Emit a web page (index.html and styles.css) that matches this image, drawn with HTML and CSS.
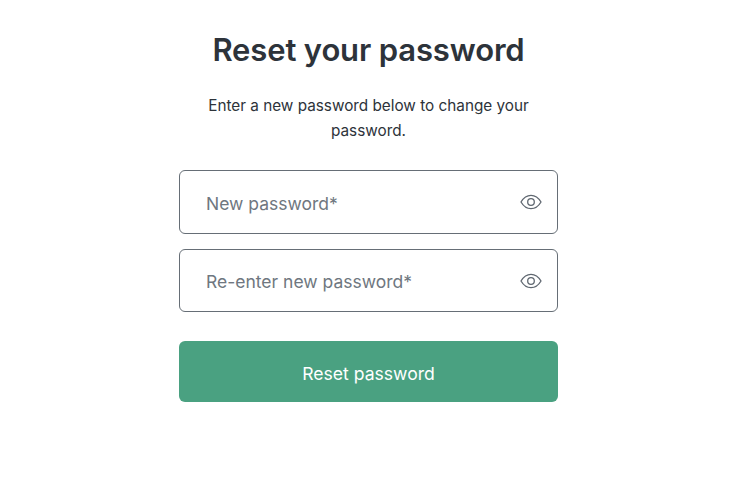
FILE: index.html
```html
<!DOCTYPE html>
<html lang="en">
<head>
<meta charset="utf-8">
<title>Reset your password</title>
<link rel="stylesheet" href="styles.css">
</head>
<body>
<main class="card">
  <h1 class="title">Reset your password</h1>
  <p class="lead">Enter a new password below to change your password.</p>
  <form class="form">
    <div class="field">
      <input class="input" type="password" placeholder="New password*">
      <svg class="eye" viewBox="0 0 22 16" aria-hidden="true"><path d="M1 8C3.600 3.600 7 1.300 11 1.300S18.400 3.600 21 8c-2.600 4.400-6 6.700-10 6.700S3.600 12.400 1 8Z"/><circle cx="11" cy="8" r="3.300"/></svg>
    </div>
    <div class="field">
      <input class="input" type="password" placeholder="Re-enter new password*">
      <svg class="eye" viewBox="0 0 22 16" aria-hidden="true"><path d="M1 8C3.600 3.600 7 1.300 11 1.300S18.400 3.600 21 8c-2.600 4.400-6 6.700-10 6.700S3.600 12.400 1 8Z"/><circle cx="11" cy="8" r="3.300"/></svg>
    </div>
    <button class="submit" type="button">Reset password</button>
  </form>
</main>
</body>
</html>
```
FILE: styles.css
```css
* { box-sizing: border-box; }
html, body { margin: 0; height: 100%; background: #fff; }
body {
  font-family: Inter, "Liberation Sans", sans-serif;
  color: #2d333a;
  overflow: hidden;
}
.card {
  width: 379px;
  margin-left: 179px;
  padding-top: 30px;
  display: flex;
  flex-direction: column;
  align-items: center;
}
.title {
  margin: 0;
  font-size: 31px;
  line-height: 40px;
  font-weight: 600;
  letter-spacing: -0.14px;
  white-space: nowrap;
}
.lead {
  width: 330px;
  margin: 23px 0 0;
  font-size: 15.300px;
  line-height: 25px;
  font-weight: 400;
  text-align: center;
  color: #2d333a;
}
.form {
  width: 100%;
  margin-top: 27px;
  display: flex;
  flex-direction: column;
  gap: 15px;
}
.field { position: relative; height: 64px; }
.field + .field { height: 63px; }
.input {
  display: block;
  width: 100%;
  height: 100%;
  padding: 2px 56px 0 26px;
  border: 1px solid #666e76;
  border-radius: 6px;
  background: #fff;
  font: 400 17.500px Inter, "Liberation Sans", sans-serif;
  color: #2d333a;
  outline: none;
}
.input::placeholder { color: #6f7780; opacity: 1; }
.eye {
  position: absolute;
  right: 16.500px;
  top: 24px;
  width: 22px;
  height: 16px;
  fill: none;
  stroke: #5f6770;
  stroke-width: 1.300;
}
.submit {
  height: 61px;
  margin-top: 14px;
  padding: 3px 0 0;
  border: 0;
  border-radius: 6px;
  background: #4aa181;
  color: #fff;
  font: 400 17.600px Inter, "Liberation Sans", sans-serif;
}
```
